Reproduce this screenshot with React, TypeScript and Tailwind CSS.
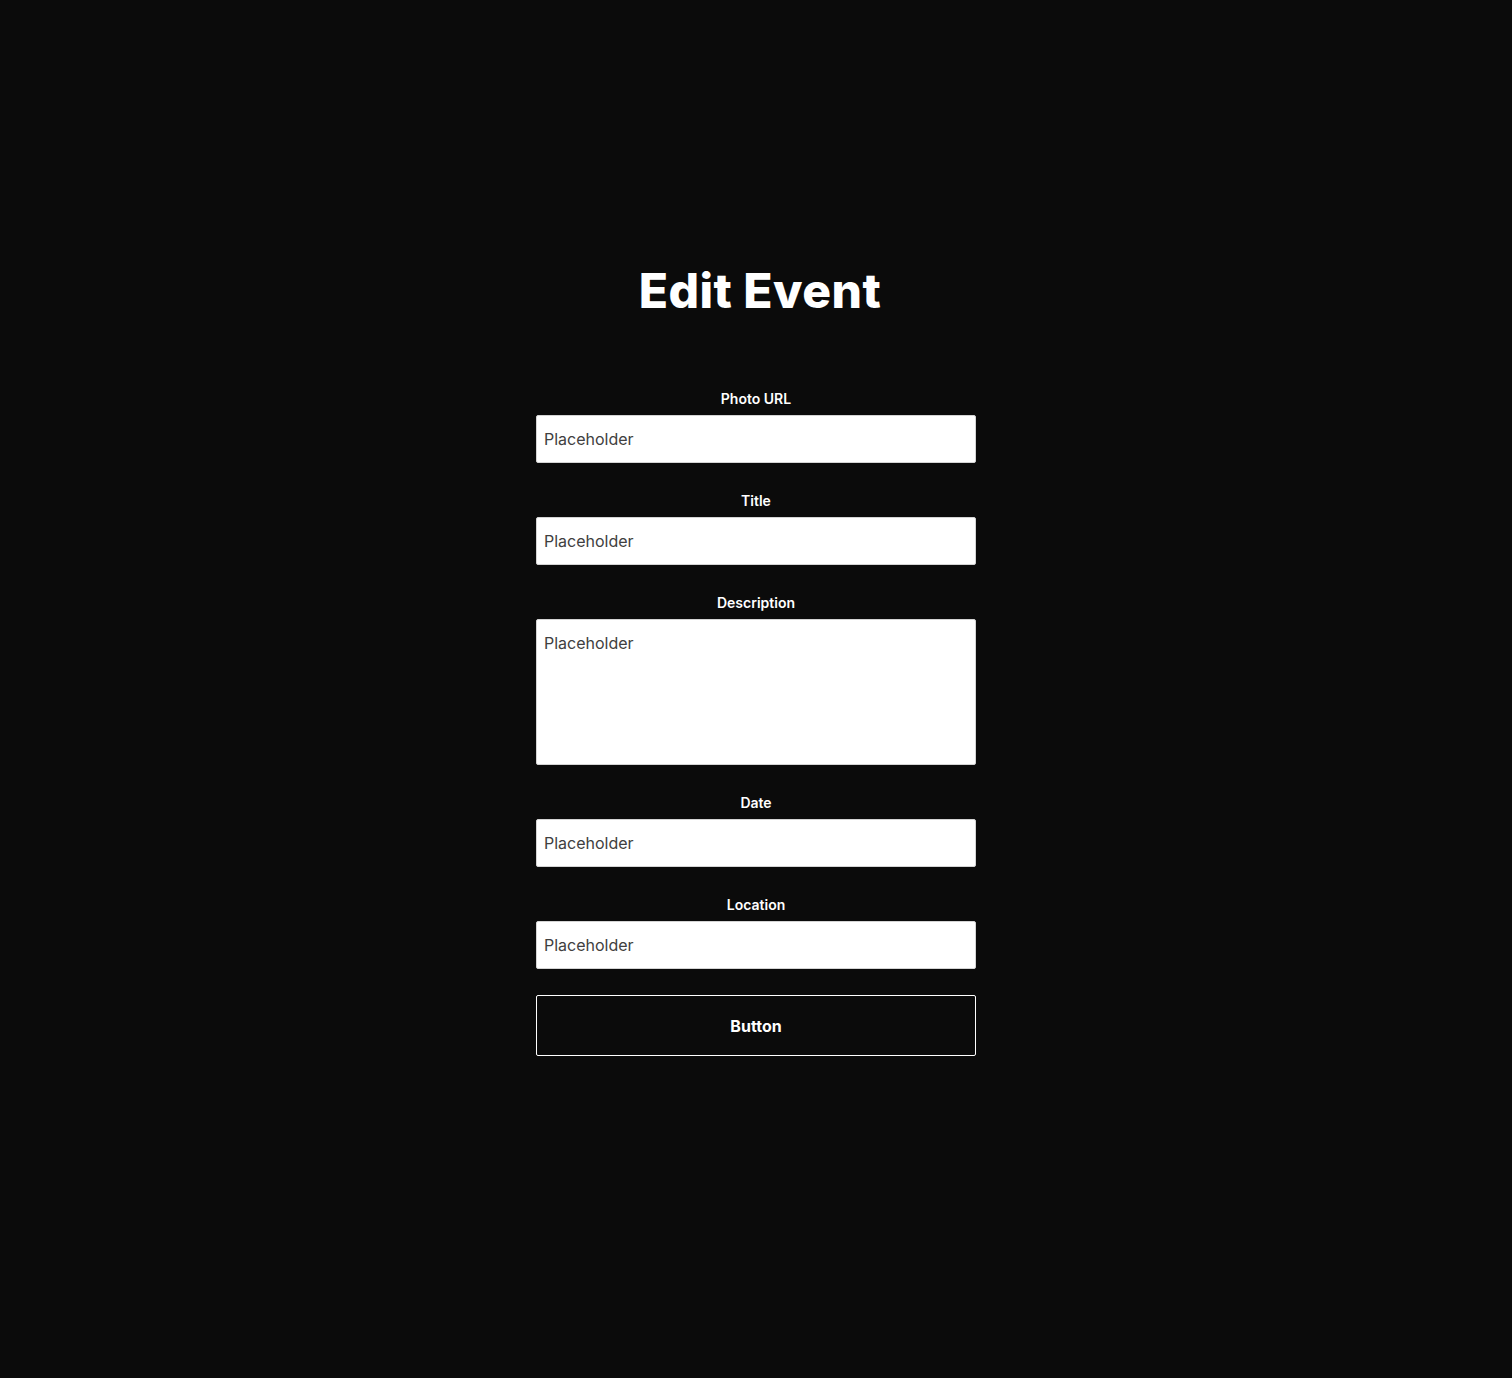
export default function App() {
  const fields = ["Photo URL", "Title"];
  const lower = ["Date", "Location"];

  return (
    <div
      className="min-h-[1378px] w-full bg-[#0b0b0b] text-white flex flex-col items-center pt-[262px]"
      style={{ fontFamily: "Inter, 'Noto Sans', sans-serif" }}
    >
      <h1 className="text-[48px] leading-[58px] font-extrabold tracking-[0.01em] pl-[8px]">Edit Event</h1>

      <form className="w-[440px] mt-[69px] flex flex-col" onSubmit={(e) => e.preventDefault()}>
        {fields.map((f) => (
          <div key={f} className="flex flex-col mb-[28px]">
            <label className="text-[14px] leading-[20px] font-semibold text-center mb-[6px]">{f}</label>
            <input
              placeholder="Placeholder"
              className="h-[48px] w-full bg-white rounded-[2px] border border-[#d4d4d4] px-[7px] text-[16px] text-[#333] placeholder:text-[#404040] outline-none"
            />
          </div>
        ))}

        <div className="flex flex-col mb-[28px]">
          <label className="text-[14px] leading-[20px] font-semibold text-center mb-[6px]">Description</label>
          <textarea
            placeholder="Placeholder"
            className="h-[146px] w-full bg-white rounded-[2px] border border-[#d4d4d4] px-[7px] pt-[13px] text-[16px] leading-[20px] text-[#333] placeholder:text-[#404040] outline-none resize-none"
          />
        </div>

        {lower.map((f, i) => (
          <div key={f} className={`flex flex-col ${i === lower.length - 1 ? "mb-[26px]" : "mb-[28px]"}`}>
            <label className="text-[14px] leading-[20px] font-semibold text-center mb-[6px]">{f}</label>
            <input
              placeholder="Placeholder"
              className="h-[48px] w-full bg-white rounded-[2px] border border-[#d4d4d4] px-[7px] text-[16px] text-[#333] placeholder:text-[#404040] outline-none"
            />
          </div>
        ))}

        <button
          type="submit"
          className="h-[61px] w-full border border-white rounded-[2px] text-[16px] font-bold text-white bg-transparent"
        >
          Button
        </button>
      </form>
    </div>
  );
}
